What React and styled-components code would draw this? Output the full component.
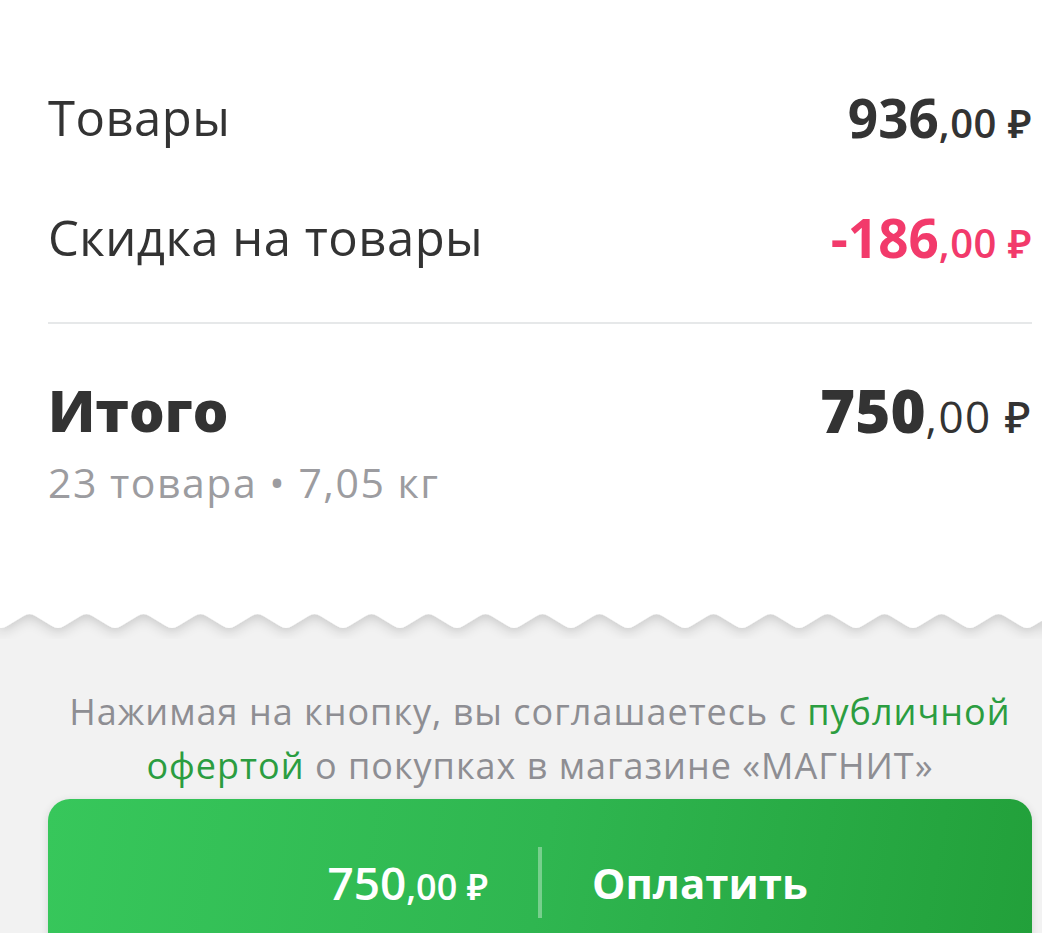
import React from 'react';
import styled, { createGlobalStyle } from 'styled-components';

// Global.
const GlobalStyle = createGlobalStyle`
    html, body {
        margin: 0;
        padding: 0;
        background: #f2f2f2;
    }
    body {
        font-family: "Open Sans", "Noto Sans", sans-serif;
        color: #333333;
        overflow: hidden;
    }
`

// Wave edge path for the receipt.
const buildWave = (width) => {
    const period = 57;
    const top = 14;
    const bottom = 30;
    let d = `M0 0 L0 ${bottom - 3} `;
    for (let x = 1 - period; x < width + period; x += period) {
        d += `L${x - 6} ${bottom - 3} Q${x} ${bottom + 1} ${x + 6} ${bottom - 3} `;
        d += `L${x + 22.5} ${top + 3} Q${x + 28.5} ${top - 1} ${x + 34.5} ${top + 3} `;
        d += `L${x + period - 6} ${bottom - 3} `;
    }
    d += `L${width} ${bottom - 3} L${width} 0 Z`;
    return d;
}

const Price = ({ value, color }) => (
    <PriceText $color={color}>
        {value}<Cents>,00 ₽</Cents>
    </PriceText>
)

const App = () => {
    return (
        <Page>
            <GlobalStyle />
            <Receipt>
                <Row>
                    <Label>Товары</Label>
                    <Price value="936" />
                </Row>
                <Row>
                    <Label>Скидка на товары</Label>
                    <Price value="-186" color="#f23a6b" />
                </Row>
                <Divider />
                <TotalRow>
                    <TotalBlock>
                        <TotalLabel>Итого</TotalLabel>
                        <TotalMeta>23 товара • 7,05 кг</TotalMeta>
                    </TotalBlock>
                    <TotalPrice>750<TotalCents>,00 ₽</TotalCents></TotalPrice>
                </TotalRow>
            </Receipt>

            <WaveEdge viewBox="0 0 1042 40" preserveAspectRatio="none">
                <defs>
                    <filter id="waveShadow" x="-5%" y="-50%" width="110%" height="250%">
                        <feDropShadow dx="0" dy="4" stdDeviation="6" floodColor="#000" floodOpacity="0.16" />
                    </filter>
                </defs>
                <path d={buildWave(1042)} fill="#ffffff" filter="url(#waveShadow)" />
            </WaveEdge>

            <Footer>
                <Terms>
                    Нажимая на кнопку, вы соглашаетесь с <TermsLink>публичной</TermsLink> <TermsLink>офертой</TermsLink> о покупках в магазине «МАГНИТ»
                </Terms>
                <PayButton>
                    <PayPrice>750<PayCents>,00 ₽</PayCents></PayPrice>
                    <PaySep />
                    <PayLabel>Оплатить</PayLabel>
                </PayButton>
            </Footer>
        </Page>
    )
}

// Page.
const Page = styled.div`
    width: 1042px;
    height: 933px;
    overflow: hidden;
    display: flex;
    flex-direction: column;
    background: #f2f2f2;
    & > * {
        flex-shrink: 0;
    }
`

// White receipt part.
const Receipt = styled.div`
    background: #ffffff;
    padding: 57px 10px 96px 48px;
    display: flex;
    flex-direction: column;
    position: relative;
    z-index: 1;
`

const Row = styled.div`
    height: 120px;
    display: flex;
    align-items: center;
    justify-content: space-between;
`

const Label = styled.div`
    font-size: 49px;
    font-weight: 400;
    color: #333333;
    letter-spacing: 0.5px;
`

const PriceText = styled.div`
    font-size: 53px;
    font-weight: 700;
    color: ${(p) => p.$color || '#333333'};
    white-space: nowrap;
`

const Cents = styled.span`
    font-size: 40px;
    font-weight: 600;
    letter-spacing: 0.5px;
`

const Divider = styled.div`
    height: 2px;
    background: #e6e8e9;
    margin-top: 25px;
`

const TotalRow = styled.div`
    display: flex;
    justify-content: space-between;
    align-items: flex-start;
    margin-top: 56px;
`

const TotalBlock = styled.div`
    display: flex;
    flex-direction: column;
`

const TotalLabel = styled.div`
    font-size: 56px;
    font-weight: 800;
    line-height: 60px;
    color: #333333;
`

const TotalMeta = styled.div`
    font-size: 41px;
    line-height: 44px;
    margin-top: 20px;
    letter-spacing: 1.5px;
    color: #9c9ca0;
`

const TotalPrice = styled.div`
    font-size: 60px;
    font-weight: 800;
    line-height: 60px;
    color: #333333;
    white-space: nowrap;
`

const TotalCents = styled.span`
    font-size: 44px;
    font-weight: 500;
    letter-spacing: 1.5px;
`

const WaveEdge = styled.svg`
    display: block;
    width: 1042px;
    height: 40px;
    margin-top: -1px;
    position: relative;
    z-index: 2;
`

// Grey bottom part.
const Footer = styled.div`
    padding: 46px 10px 0 48px;
    display: flex;
    flex-direction: column;
    align-items: stretch;
`

const Terms = styled.p`
    margin: 0;
    text-align: center;
    font-size: 36px;
    line-height: 54px;
    letter-spacing: 1px;
    color: #8e8e93;
`

const TermsLink = styled.span`
    color: #2b9d40;
`

const PayButton = styled.div`
    margin-top: 6px;
    height: 166px;
    border-radius: 22px;
    background: linear-gradient(100deg, #37c75b 0%, #2fb650 50%, #22a03a 100%);
    box-shadow: 0 2px 8px rgba(0, 0, 0, 0.12);
    display: grid;
    grid-template-columns: 1fr auto 1fr;
    align-items: center;
    color: #ffffff;
`

const PayPrice = styled.div`
    justify-self: end;
    padding-right: 50px;
    font-size: 46px;
    font-weight: 600;
    white-space: nowrap;
`

const PayCents = styled.span`
    font-size: 36px;
`

const PaySep = styled.div`
    width: 4px;
    height: 71px;
    background: rgba(255, 255, 255, 0.35);
`

const PayLabel = styled.div`
    justify-self: start;
    padding-left: 50px;
    font-size: 42px;
    font-weight: 700;
`

export default App;
